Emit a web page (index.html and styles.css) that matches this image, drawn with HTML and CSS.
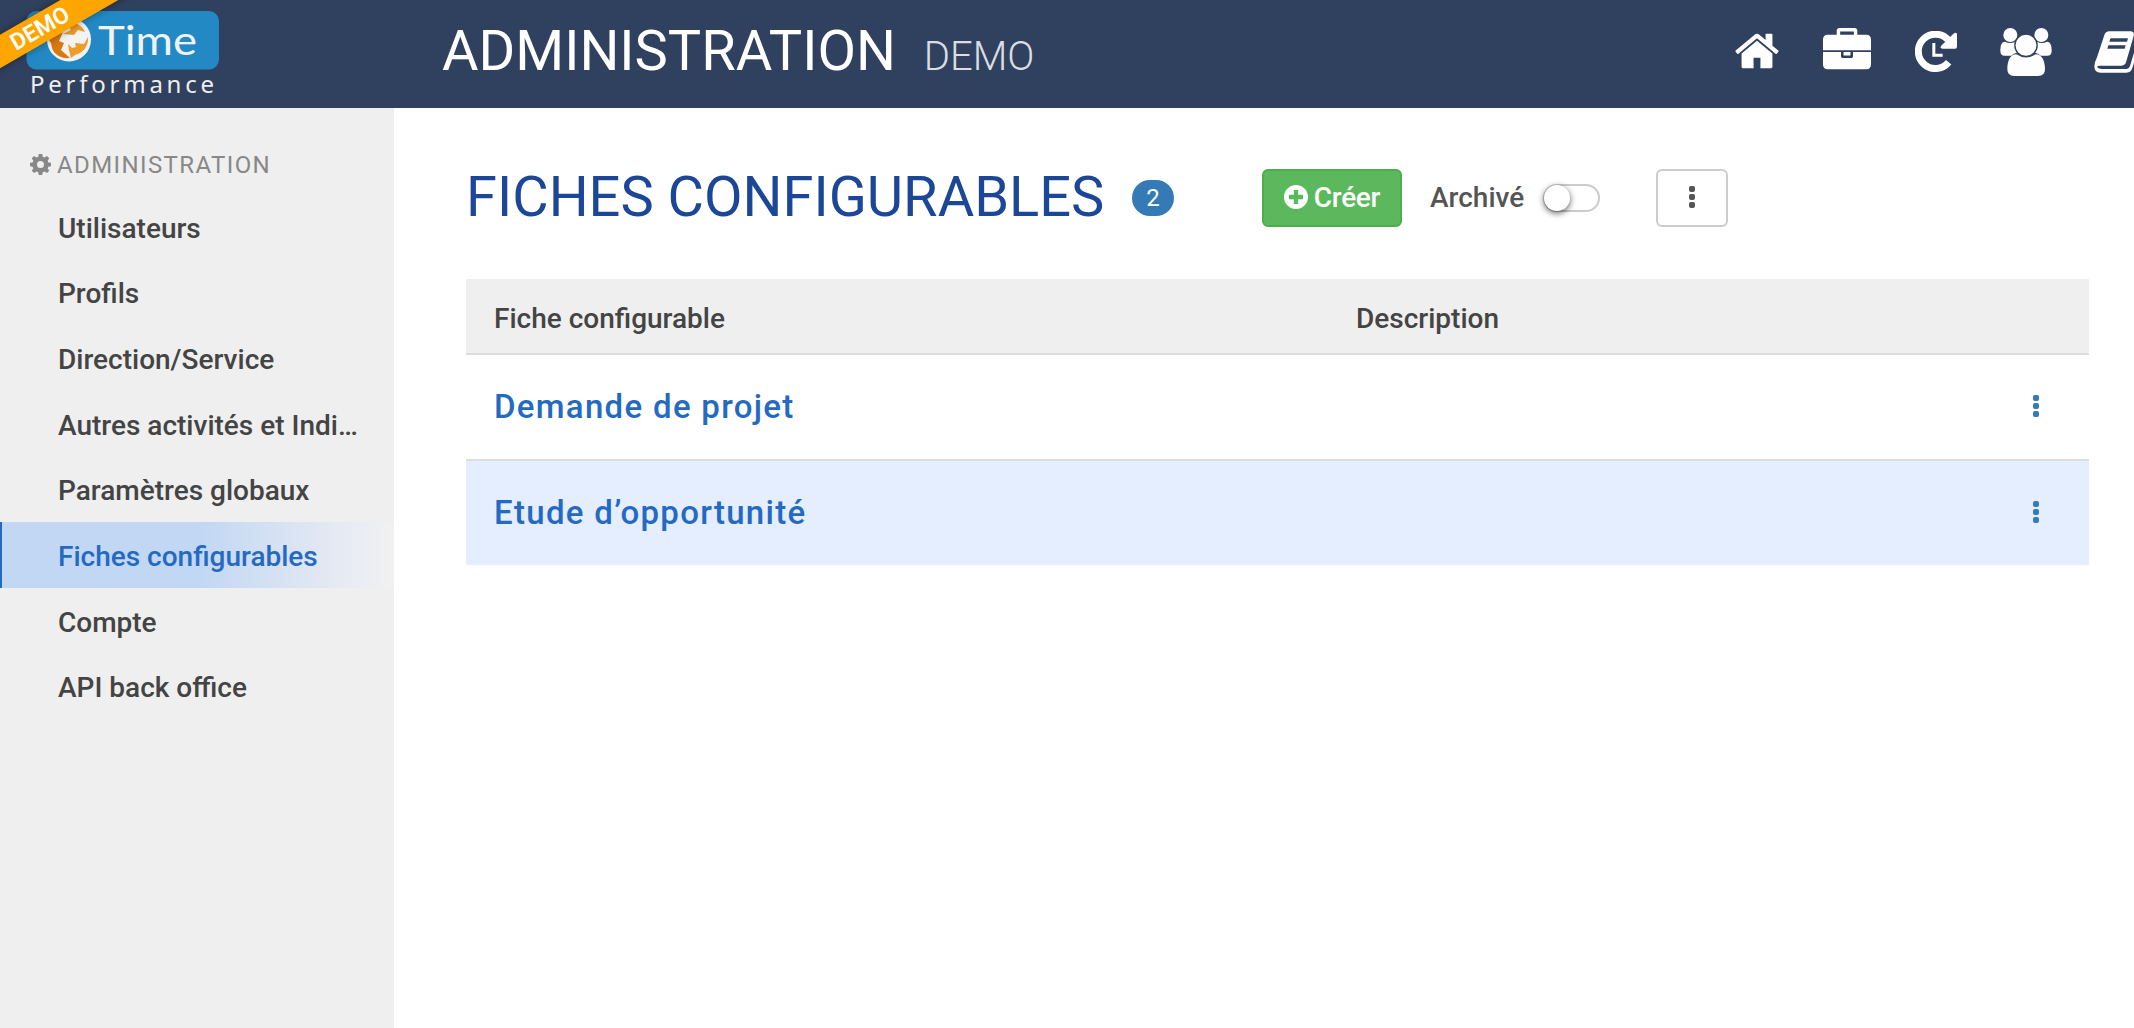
FILE: index.html
```html
<!DOCTYPE html>
<html lang="fr">
<head>
  <meta charset="UTF-8" />
  <meta name="viewport" content="width=device-width, initial-scale=1.0"/>
  <title>Administration - Fiches configurables</title>
  <link rel="stylesheet" href="styles.css">
</head>
<body>

  <header class="topbar">
    <div class="brand">
      <svg class="logo" viewBox="0 0 240 108">
        <rect x="26.500" y="11" width="192.500" height="58.500" rx="10" fill="#2389c5"/>
        <circle cx="69" cy="39.500" r="22" fill="#f3f3f3"/>
        <path d="M49 40l14-8-4 9 5 2-3 7 9 8c-10 1-16-4-18-10l-1-5z" fill="#d9780f"/>
        <path d="M72 22c7 2 11 5 13 10l-7-2-4 5-11-1 8-4-3-4zM88 37c1 9-5 16-13 18l-4 3-2-8-1-6 4 4 4-1-1-4 9 1z" fill="#ee9d2b"/>
        <text class="logo-time" x="98" y="55" textLength="99" lengthAdjust="spacingAndGlyphs">Time</text>
        <text class="logo-perf" x="30" y="93" textLength="184">Performance</text>
      </svg>
      <div class="ribbon">DEMO</div>
    </div>
    <h1 class="app-title">ADMINISTRATION <small>DEMO</small></h1>
    <nav class="topnav">
      <svg class="icon-home" viewBox="0 0 1792 1792"><path d="M1472 992v480q0 26-19 45t-45 19h-384v-384h-256v384h-384q-26 0-45-19t-19-45v-480q0-1 .5-3t.5-3l575-474 575 474q1 2 1 6zm223-69l-62 74q-8 9-21 11h-3q-13 0-21-7l-692-577-692 577q-12 8-24 7-13-2-21-11l-62-74q-8-10-7-23.500t11-21.500l719-599q32-26 76-26t76 26l244 204v-195q0-14 9-23t23-9h192q14 0 23 9t9 23v408l219 182q10 8 11 21.500t-7 23.500z"/></svg>
      <svg class="icon-case" viewBox="0 0 1792 1792"><path d="M640 256h512v-128h-512v128zm1152 640v480q0 66-47 113t-113 47h-1472q-66 0-113-47t-47-113v-480h672v160q0 26 19 45t45 19h320q26 0 45-19t19-45v-160h672zm-768 0v128h-256v-128h256zm768-64h-1792v-416q0-66 47-113t113-47h352v-160q0-40 28-68t68-28h576q40 0 68 28t28 68v160h352q66 0 113 47t47 113z"/></svg>
      <svg class="icon-clock" viewBox="0 0 126 124">
        <path d="M101 94A51.500 51.500 0 1 1 99 26" fill="none" stroke="#fff" stroke-width="21"/>
        <path d="M126 9v38q0 6-6 6H82q-8-2-4-8L117 7q7-5 9 2z"/>
        <path d="M52 36h9v32h22v9H52z"/>
      </svg>
      <svg class="icon-users" viewBox="0 0 156 146">
        <path d="M1 65q0-23 14-24 14 8 31 0Q43 65 54 73 40 77 34 83H14Q0 83 1 65zM155 65q0-23-14-24-14 8-31 0 3 24-8 32 14 4 20 10h20q14 0 13-18z"/>
        <circle cx="31" cy="21" r="21"/>
        <circle cx="124" cy="21" r="21"/>
        <circle class="head" cx="78" cy="52" r="33.500"/>
        <path d="M22 124c0-23 7-45 27-45q29 19 58 0c20 0 28 22 28 45q0 20-21 20H43q-21 0-21-20z"/>
      </svg>
      <svg class="icon-book" viewBox="0 0 140 126">
        <path fill-rule="evenodd" d="M46 1h66q10 2 7 14L97 91q-3 13-15 13H17q-9 0-7 5 3 5 13 5h75q7 0 10-9l22-73q7 5 4 16l-19 63q-4 14-18 14H20Q1 124 1 107q0-13 8-28L31 12q4-11 15-11zM49 22l-3 10h53l3-10zM43 43l-3 10h52l3-10z"/>
      </svg>
    </nav>
  </header>

  <div class="layout">
    <aside class="sidebar">
      <div class="sidebar-title">
        <svg viewBox="0 0 24 24"><path fill-rule="evenodd" d="M10 0h4l.6 3.200 2 .9L19.400 2.200l2.600 2.600-1.800 2.900.8 2L24 10v4l-3 .5-.8 2 1.800 2.700-2.600 2.600-2.800-1.800-2 .8L14 24h-4l-.6-3.200-2-.8-2.800 1.800L2 19.200l1.800-2.700-.8-2L0 14v-4l3-.4.8-2L2 4.800l2.600-2.600 2.800 1.900 2-.9zM12 8a4 4 0 1 0 0 8 4 4 0 0 0 0-8z"/></svg>
        ADMINISTRATION
      </div>
      <a class="item">Utilisateurs</a>
      <a class="item">Profils</a>
      <a class="item">Direction/Service</a>
      <a class="item">Autres activités et Indicateurs</a>
      <a class="item">Paramètres globaux</a>
      <a class="item active">Fiches configurables</a>
      <a class="item">Compte</a>
      <a class="item">API back office</a>
    </aside>

    <main class="content">
      <div class="toolbar">
        <h2>FICHES CONFIGURABLES</h2>
        <span class="badge">2</span>
        <button class="btn btn-create">
          <svg viewBox="0 0 24 24"><path fill-rule="evenodd" d="M12 0a12 12 0 1 1 0 24 12 12 0 0 1 0-24zM9.800 5v4.800H5v4.400h4.800V19h4.400v-4.800H19V9.800h-4.800V5z"/></svg>
          Créer
        </button>
        <span class="switch-label">Archivé</span>
        <span class="switch"></span>
        <button class="btn btn-more"><span class="dots"><i></i><i></i><i></i></span></button>
      </div>

      <div class="table">
        <div class="row head">
          <span>Fiche configurable</span>
          <span>Description</span>
        </div>
        <div class="row">
          <a>Demande de projet</a>
          <span></span>
          <span class="dots"><i></i><i></i><i></i></span>
        </div>
        <div class="row selected">
          <a>Etude d’opportunité</a>
          <span></span>
          <span class="dots"><i></i><i></i><i></i></span>
        </div>
      </div>
    </main>
  </div>

</body>
</html>
```
FILE: styles.css
```css
* {
  box-sizing: border-box;
}

body {
  margin: 0;
  height: 100vh;
  display: flex;
  flex-direction: column;
  overflow: hidden;
  font-family: Roboto, sans-serif;
  font-size: 28px;
  color: #444;
  background: #fff;
}

/* Top bar */
.topbar {
  height: 108px;
  flex: none;
  display: flex;
  background: #30415f;
  color: #fff;
  overflow: hidden;
}

.brand {
  position: relative;
  width: 442px;
  flex: none;
}

.logo {
  display: block;
  width: 240px;
  height: 108px;
}

.logo-time {
  font-family: Lato, sans-serif;
  font-size: 40px;
  fill: #f0f3f6;
}

.logo-perf {
  font-family: "Noto Sans", sans-serif;
  font-size: 24px;
  fill: #eee;
}

.ribbon {
  position: absolute;
  left: -60px;
  top: 14px;
  width: 200px;
  height: 29px;
  line-height: 29px;
  text-align: center;
  font-size: 23px;
  font-weight: 600;
  background: #ffa500;
  box-shadow: 0 0 8px rgba(0,0,0,0.4);
  transform: rotate(-30deg);
}

.app-title {
  margin: 0;
  font-size: 56px;
  font-weight: 400;
  line-height: 103px;
  white-space: nowrap;
}

.app-title small {
  margin-left: 14px;
  font-size: 40px;
  font-weight: 300;
  color: #dadde2;
}

.topnav {
  flex: none;
  display: flex;
  align-items: flex-start;
  margin-left: auto;
}

.topnav svg {
  flex: none;
  fill: #fff;
}

.icon-home {
  width: 48px;
  height: 48px;
  margin: 27px 41.5px 0 0;
}

.icon-case {
  width: 48px;
  height: 48px;
  margin: 28px 44.5px 0 0;
}

.icon-clock {
  width: 42px;
  height: 41.3px;
  margin: 31px 43px 0 0;
}

.icon-users {
  width: 52px;
  height: 48.7px;
  margin: 28px 41.6px 0 0;
}

.icon-users .head {
  stroke: #30415f;
  stroke-width: 4px;
}

.icon-book {
  width: 46.7px;
  height: 42px;
  margin: 31px -6.5px 0 0;
}

.layout {
  flex: 1;
  display: flex;
}

/* Side menu */
.sidebar {
  width: 394px;
  flex: none;
  padding-top: 37px;
  background: #efefef;
}

.sidebar-title {
  display: flex;
  align-items: center;
  gap: 6px;
  height: 39px;
  margin-bottom: 9.5px;
  padding-left: 30px;
  font-size: 24px;
  letter-spacing: 1.4px;
  color: #888;
}

.sidebar-title svg {
  width: 21px;
  height: 21px;
  fill: #888;
}

.item {
  display: block;
  height: 65.7px;
  line-height: 69px;
  padding: 0 35px 0 56px;
  border-left: 2px solid transparent;
  font-weight: 500;
  white-space: nowrap;
  overflow: hidden;
  text-overflow: ellipsis;
}

.item.active {
  color: #256ac2;
  border-left-color: #256ac2;
  background: linear-gradient(to right, #c1d7f3 50%, #e6eaf3 86%, #f1f1f1 100%);
}

/* Page content */
.content {
  flex: 1;
  padding: 61px 45px 0 72px;
}

.toolbar {
  display: flex;
  align-items: center;
  height: 58px;
  margin-bottom: 52px;
}

.toolbar h2 {
  margin: 0;
  width: 666px;
  padding-bottom: 2px;
  font-size: 56px;
  font-weight: 400;
  line-height: 56px;
  color: #1c4799;
}

.badge {
  width: 42px;
  height: 36px;
  margin-right: 88px;
  border-radius: 18px;
  line-height: 36px;
  text-align: center;
  font-size: 24px;
  color: #fff;
  background: #337ab7;
}

.btn {
  display: flex;
  align-items: center;
  justify-content: center;
  height: 58px;
  padding: 0;
  border: 2px solid #ccc;
  border-radius: 6px;
  background: #fff;
  font: 500 28px Roboto, sans-serif;
}

.btn-create {
  width: 140px;
  gap: 6px;
  margin-right: 28px;
  padding-bottom: 2px;
  letter-spacing: -0.3px;
  color: #fff;
  background: #5cb85c;
  border-color: #4cae4c;
}

.btn-create svg {
  width: 24px;
  height: 24px;
  fill: #fff;
}

.switch-label {
  width: 113px;
  padding-bottom: 2px;
  font-weight: 500;
  color: #555;
}

.switch {
  width: 57px;
  height: 28px;
  margin-right: 56px;
  border: 2px solid #ccc;
  border-radius: 14px;
}

.switch::before {
  content: "";
  display: block;
  width: 26px;
  height: 26px;
  margin: -1px 0 0 -1px;
  border-radius: 50%;
  background: #fff;
  box-shadow: 0 2px 6px rgba(0,0,0,0.65);
}

.btn-more {
  width: 72px;
  padding-bottom: 2px;
  color: #555;
}

.dots {
  display: flex;
  flex-direction: column;
  gap: 2px;
  width: 6px;
}

.dots i {
  height: 6px;
  border-radius: 2px;
  background: currentColor;
}

.row {
  display: grid;
  grid-template-columns: 862px 1fr 6px;
  align-items: center;
  height: 106px;
  padding: 0 50px 2px 28px;
  border-bottom: 2px solid #ddd;
  color: #337ab7;
}

.row.head {
  height: 76px;
  padding-top: 4px;
  padding-bottom: 0;
  background: #efefef;
  color: #444;
  font-weight: 500;
}

.row.selected {
  height: 104px;
  border-bottom: none;
  background: #e5eeff;
}

.row a {
  font-size: 33px;
  font-weight: 500;
  letter-spacing: 1.3px;
  color: #256ac2;
}
```
